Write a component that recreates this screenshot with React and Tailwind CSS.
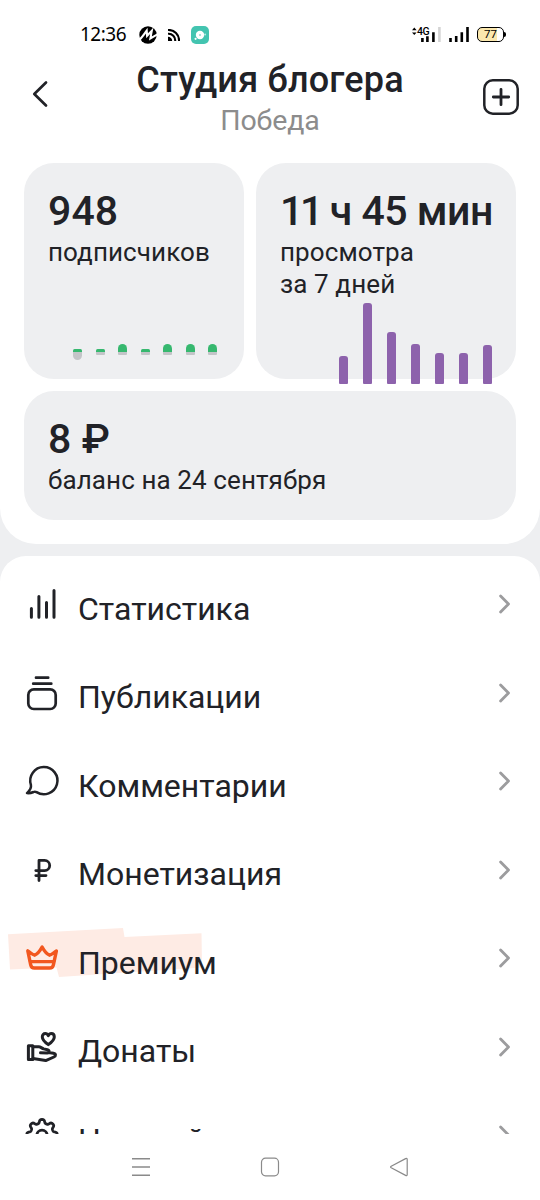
import React from 'react';

const subscribers = [
  { up: 3, down: 7.5 },
  { up: 3, down: 3 },
  { up: 8, down: 3 },
  { up: 3, down: 3 },
  { up: 8, down: 3 },
  { up: 8, down: 3 },
  { up: 8, down: 3 },
];

const views = [28.7, 81, 52.7, 40.7, 31.7, 31.7, 39.3];

// Gear outline with eight soft teeth
const gearPath = () => {
  const pts = [];
  for (let i = 0; i < 240; i++) {
    const a = (i / 240) * Math.PI * 2;
    const r = 13.4 + 1.9 * Math.tanh(1.8 * Math.cos(8 * a));
    pts.push(`${(20 + r * Math.sin(a)).toFixed(2)} ${(19.7 - r * Math.cos(a)).toFixed(2)}`);
  }
  return `M${pts.join('L')}Z`;
};

const Icon = ({ children, width = 2.7, color = '#212227' }) => (
  <svg
    className="relative h-10 w-10 shrink-0"
    viewBox="0 0 40 40"
    fill="none"
    stroke={color}
    strokeWidth={width}
    strokeLinecap="round"
    strokeLinejoin="round"
  >
    {children}
  </svg>
);

const items = [
  {
    label: 'Статистика',
    icon: (
      <Icon width={3}>
        <path d="M9.4 24.6V33.3M16.9 12.4V33.3M24.5 18.4V33.3M32 6.4V33.3" />
      </Icon>
    ),
  },
  {
    label: 'Публикации',
    icon: (
      <Icon>
        <path d="M14 4.7H26.2M11.2 10.7H29.3" />
        <rect x="6.3" y="16.4" width="27.4" height="19.6" rx="5.5" />
      </Icon>
    ),
  },
  {
    label: 'Комментарии',
    icon: (
      <Icon width={2.5}>
        <path d="M8.9 23.8A13.6 13.6 0 1 1 14.5 31.1C13.5 30.6 12.6 30.5 11.6 31C9.5 31.9 7 32.5 5 32.1C7.7 29.8 9.5 27 8.9 23.8Z" />
      </Icon>
    ),
  },
  {
    label: 'Монетизация',
    icon: (
      <Icon width={2.8}>
        <path d="M17 30.6V10.4H22.6A5.1 5.1 0 0 1 22.6 20.6H13.8M13.8 25.6H24" />
      </Icon>
    ),
  },
  {
    label: 'Премиум',
    highlight: true,
    icon: (
      <Icon width={3.4} color="#f2571f">
        <path d="M5.8 12.9L8.7 26.8Q9.4 30 12.4 30H27.7Q30.7 30 31.4 26.8L34.4 12.9C32 14.3 30 16.6 27.6 17.2C24.7 16.2 22.3 13 20.1 9C17.9 13 15.5 16.2 12.6 17.2C10.2 16.6 8.2 14.3 5.8 12.9Z" />
        <path d="M8.6 23.6H31.6" />
      </Icon>
    ),
  },
  {
    label: 'Донаты',
    icon: (
      <Icon width={3}>
        <path d="M26.3 17.6C23 15.2 20.3 12.8 20.3 9.9C20.3 7.9 21.6 6.5 23.3 6.5C24.8 6.5 25.8 7.6 26.3 8.7C26.8 7.6 27.8 6.5 29.3 6.5C31 6.5 32.3 7.9 32.3 9.9C32.3 12.8 29.6 15.2 26.3 17.6Z" />
        <path d="M6.4 18.8H10.8V32.4H6.4Z" />
        <path d="M11 19.8H16.8C18.6 19.8 19.7 21.2 21.7 21.9L25.4 22.7C27.7 23.2 27.6 25.8 25.2 25.9L18.5 25.8M26.6 25.5L31.4 26.2C34.1 26.7 34.1 29 31.9 30L23.7 33.6L11 31.5" />
      </Icon>
    ),
  },
  {
    label: 'Настройки канала',
    icon: (
      <Icon width={2.8}>
        <path d={gearPath()} />
        <circle cx="20" cy="20.4" r="5.2" />
      </Icon>
    ),
  },
];

const StatusBar = () => (
  <div className="flex h-[34px] items-center pt-[1px] pr-[34px] pl-20 text-black">
    <span className="w-[59px] font-['Noto_Sans'] text-[19px] leading-none tracking-[-0.5px]">12:36</span>
    <svg className="h-[18px] w-[18px]" viewBox="0 0 18 18">
      <circle cx="9" cy="9" r="8.7" fill="#000" />
      <path d="M-0.5 14.2C2.6 12.7 5 8.3 7.7 4.6L8.1 9.7L12.8 4.7L11.4 12.4L18.5 8.3" fill="none" stroke="#fff" strokeWidth="2.1" />
    </svg>
    <svg className="ml-[11px] h-3 w-3" viewBox="0 0 12 12" fill="none" stroke="#000" strokeWidth="2.1">
      <path d="M0 1A10.3 10.3 0 0 1 11 12M0 4.8A6.6 6.6 0 0 1 7.2 12" />
      <path d="M0 7.8A4.2 4.2 0 0 1 4.2 12H0Z" fill="#000" stroke="none" />
    </svg>
    <svg className="ml-[11px] h-[18px] w-[18px]" viewBox="0 0 18 18">
      <rect width="18" height="18" rx="5" fill="#43c4b0" />
      <circle cx="9" cy="9" r="4.2" fill="#fff" />
      <circle cx="14.1" cy="8.4" r="1" fill="#b7eae2" />
      <circle cx="4.6" cy="12.8" r="1.1" fill="#fff" />
      <circle cx="9" cy="9" r="0.8" fill="#43c4b0" />
    </svg>

    <div className="ml-auto flex items-center">
      <div className="relative h-[15px] w-[29px]">
        <svg className="h-[15px] w-[29px]" viewBox="0 0 29 15">
          <path d="M0 3.2L2.3 0.6L4.6 3.2ZM0 5.4L2.3 8L4.6 5.4Z" fill="#000" />
          <path d="M10.4 11V15M15.4 9.3V15M21.4 5.2V15" stroke="#000" strokeWidth="2.6" />
          <path d="M27.4 0V15" stroke="#d4d4d4" strokeWidth="2.6" />
        </svg>
        <span className="absolute top-0 left-[5px] font-['Roboto'] text-[10.5px] leading-[9px] font-medium tracking-[-0.4px]">4G</span>
      </div>
      <svg className="ml-2 h-[15px] w-5" viewBox="0 0 20 15">
        <path d="M1.5 11V15M7.2 9V15M12.8 5.2V15M18.5 0V15" stroke="#000" strokeWidth="2.6" />
      </svg>
      <div className="ml-2 flex h-[15px] w-[27px] items-center justify-center rounded-[5px] border-[1.5px] border-black bg-linear-to-r from-[#fbe8ae] from-77% to-white to-77% font-['Roboto'] text-[11.5px] leading-none">
        77
      </div>
      <div className="h-[5px] w-[2px] rounded-r-sm bg-black" />
    </div>
  </div>
);

const Header = () => (
  <header className="flex h-[95px] items-start justify-between pr-[21px] pl-[32px]">
    <svg className="mt-[12px] h-7 w-[17px]" viewBox="0 0 17 28" fill="none" stroke="#212227" strokeWidth="2.7" strokeLinecap="round" strokeLinejoin="round">
      <path d="M14 2.5L2.3 14L14 25.5" />
    </svg>
    <div className="pl-2 text-center whitespace-nowrap">
      <h1 className="-mt-[9px] text-[36px] leading-[42px] font-medium tracking-[0.2px]">Студия блогера</h1>
      <p className="mt-px text-[28.5px] leading-[38px] tracking-[-0.1px] text-[#8c8c8c]">Победа</p>
    </div>
    <svg className="mt-[11px] h-9 w-9" viewBox="0 0 36 36" fill="none" stroke="#212227" strokeWidth="2.5" strokeLinecap="round">
      <rect x="1.3" y="1.3" width="33.4" height="33.4" rx="8.5" />
      <path d="M18 10.3V25.7M10.3 18H25.7" strokeWidth="2.8" />
    </svg>
  </header>
);

const Card = ({ title, className, children }) => (
  <div className={`flex flex-col rounded-[30px] bg-[#eeeff1] px-6 pt-6 text-[26px] leading-8 tracking-[0.1px] whitespace-nowrap ${className}`}>
    <h2 className="mb-px text-[41px] leading-[48px] font-medium">{title}</h2>
    {children}
  </div>
);

const watchTime = (
  <span className="tracking-[-0.5px]">
    <span className="tracking-[-3.3px]">11</span> ч 45 мин
  </span>
);

export default function App() {
  return (
    <div className="flex h-[1200px] w-[540px] flex-col overflow-hidden bg-[#eeeff1] font-['Roboto',sans-serif] text-[#212227]">
      <main className="min-h-0 flex-1 overflow-hidden">
        <section className="h-[544px] rounded-b-[36px] bg-white pt-[17px]">
          <StatusBar />
          <div className="h-[17px]" />
          <Header />

          <div className="flex flex-col gap-3 px-6">
            <div className="flex h-[216px] gap-3">
              {/* Subscribers */}
              <Card title="948" className="w-[220px]">
                <p>подписчиков</p>
                <div className="mt-[76px] flex justify-end gap-[13.5px] pr-[3px]">
                  {subscribers.map((d, i) => (
                    <div key={i} className="flex h-4 w-[9px] flex-col">
                      <div className="flex h-2 items-end">
                        <div
                          className={`w-full bg-[#36b86f] ${d.up > 4 ? 'rounded-t-[4.5px]' : 'rounded-t-[1.5px]'}`}
                          style={{ height: d.up }}
                        />
                      </div>
                      <div
                        className={`bg-[#c3c5c8] ${d.down > 4 ? 'rounded-b-[4.5px]' : 'rounded-b-[1px]'}`}
                        style={{ height: d.down }}
                      />
                    </div>
                  ))}
                </div>
              </Card>

              {/* Watch time */}
              <Card title={watchTime} className="w-[260px]">
                <p>
                  просмотра
                  <br />
                  за 7 дней
                </p>
                <div className="mt-[3.4px] flex h-[81px] shrink-0 items-end justify-end gap-[15px]">
                  {views.map((h, i) => (
                    <div key={i} className="w-[9px] rounded-t-[3px] rounded-b-[1px] bg-[#8d62ac]" style={{ height: h }} />
                  ))}
                </div>
              </Card>
            </div>

            {/* Balance */}
            <Card title="8 ₽" className="h-[129px]">
              <p>баланс на 24 сентября</p>
            </Card>
          </div>
        </section>

        <section className="mt-3 rounded-t-[26px] bg-white pt-1">
          {items.map((item) => (
            <div key={item.label} className="relative flex h-[88.5px] items-center pr-7 pl-[22px]">
              {item.highlight && (
                <svg className="absolute top-3 left-2 h-[52px] w-[196px]" viewBox="0 0 196 52">
                  <path d="M0 8.3L115 2L116.5 11L193.5 7.3L194 41.5L51 51L48.5 41.5L2 43.5Z" fill="#feebe4" />
                </svg>
              )}
              {item.icon}
              <span className="relative mt-[9px] ml-4 text-[32px] leading-10 whitespace-nowrap">{item.label}</span>
              <svg className="ml-auto h-5 w-[15px]" viewBox="0 0 15 20" fill="none" stroke="#9c9c9e" strokeWidth="2.8" strokeLinecap="round" strokeLinejoin="round">
                <path d="M3.6 2L11.5 10L3.6 18" />
              </svg>
            </div>
          ))}
        </section>
      </main>

      {/* System navigation */}
      <nav className="flex h-[66px] shrink-0 items-center justify-between bg-white px-[131px]">
        <svg className="h-5 w-5" viewBox="0 0 20 20" stroke="#8a8a8a" strokeWidth="1.4">
          <path d="M1 1.7H19M1 10H19M1 18.3H19" />
        </svg>
        <svg className="h-5 w-5" viewBox="0 0 20 20" fill="none" stroke="#8a8a8a" strokeWidth="1.2">
          <rect x="1.5" y="1.2" width="17" height="17.6" rx="4" />
        </svg>
        <svg className="h-5 w-5" viewBox="0 0 20 20" fill="none" stroke="#8a8a8a" strokeWidth="1.2" strokeLinejoin="round">
          <path d="M2.2 9.2L16.6 1.6Q18.2 1 18.2 2.6V17.4Q18.2 19 16.6 18.4L2.2 10.8Q1 10 2.2 9.2Z" />
        </svg>
      </nav>
    </div>
  );
}
